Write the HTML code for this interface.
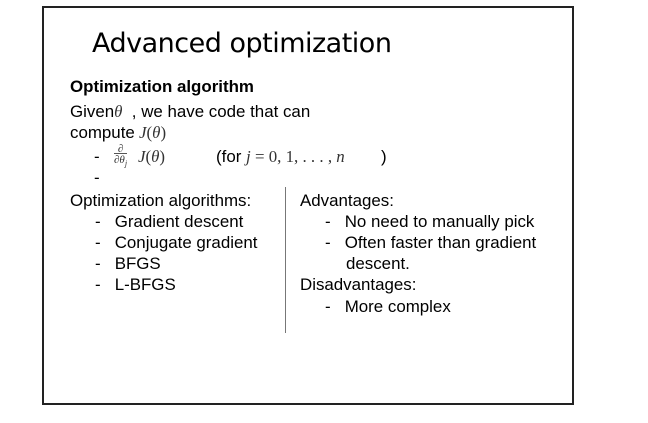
<!DOCTYPE html><html><head><style>
body{margin:0;width:648px;height:423px;background:#fff;position:relative;overflow:hidden;font-family:"Liberation Sans",sans-serif;color:#000}
.b{position:absolute;left:42px;top:6px;width:528px;height:395px;border:2px solid #222}
.t{position:absolute;white-space:nowrap;font-size:16.9px;line-height:21px}
.m{font-family:"Liberation Serif",serif;font-style:italic;color:#333}
</style></head><body>
<div class="b"></div>
<div class="t" style="left:92px;top:26px;font-size:27px;line-height:36px;font-family:'DejaVu Sans',sans-serif;letter-spacing:-0.5px">Advanced optimization</div>
<div class="t" style="left:70px;top:76px;font-weight:bold">Optimization algorithm</div>
<div class="t" style="left:70px;top:101px">Given<span class="m">θ</span> &nbsp;, we have code that can</div>
<div class="t" style="left:70px;top:122px">compute<span class="m"> J</span><span style="font-family:'Liberation Serif';color:#333">(</span><span class="m">θ</span><span style="font-family:'Liberation Serif';color:#333">)</span></div>
<div class="t" style="left:94px;top:146px">-</div>
<div class="t" style="left:114px;top:144px;font-size:11px;line-height:11px;font-family:'Liberation Serif';font-style:italic;color:#333;text-align:center">∂<br><span style="border-top:1px solid #555">∂θ<sub style="font-size:8px">j</sub></span></div>
<div class="t" style="left:138px;top:146px;font-family:'Liberation Serif';color:#333"><i>J</i>(<i>θ</i>)</div>
<div class="t" style="left:216px;top:146px">(for <span style="font-family:'Liberation Serif';color:#333"><i>j</i> = 0, 1, . . . , <i>n</i></span></div>
<div class="t" style="left:381px;top:146px">)</div>
<div class="t" style="left:94px;top:167px">-</div>
<div style="position:absolute;left:285px;top:187px;width:1px;height:146px;background:#777"></div>
<div class="t" style="left:70px;top:190px">Optimization algorithms:</div>
<div class="t" style="left:95px;top:211px">-&nbsp;&nbsp;&nbsp;Gradient descent</div>
<div class="t" style="left:95px;top:232px">-&nbsp;&nbsp;&nbsp;Conjugate gradient</div>
<div class="t" style="left:95px;top:253px">-&nbsp;&nbsp;&nbsp;BFGS</div>
<div class="t" style="left:95px;top:274px">-&nbsp;&nbsp;&nbsp;L-BFGS</div>
<div class="t" style="left:300px;top:190px">Advantages:</div>
<div class="t" style="left:325px;top:211px">-&nbsp;&nbsp;&nbsp;No need to manually pick</div>
<div class="t" style="left:325px;top:232px">-&nbsp;&nbsp;&nbsp;Often faster than gradient</div>
<div class="t" style="left:346px;top:253px">descent.</div>
<div class="t" style="left:300px;top:274px">Disadvantages:</div>
<div class="t" style="left:325px;top:296px">-&nbsp;&nbsp;&nbsp;More complex</div>
</body></html>
